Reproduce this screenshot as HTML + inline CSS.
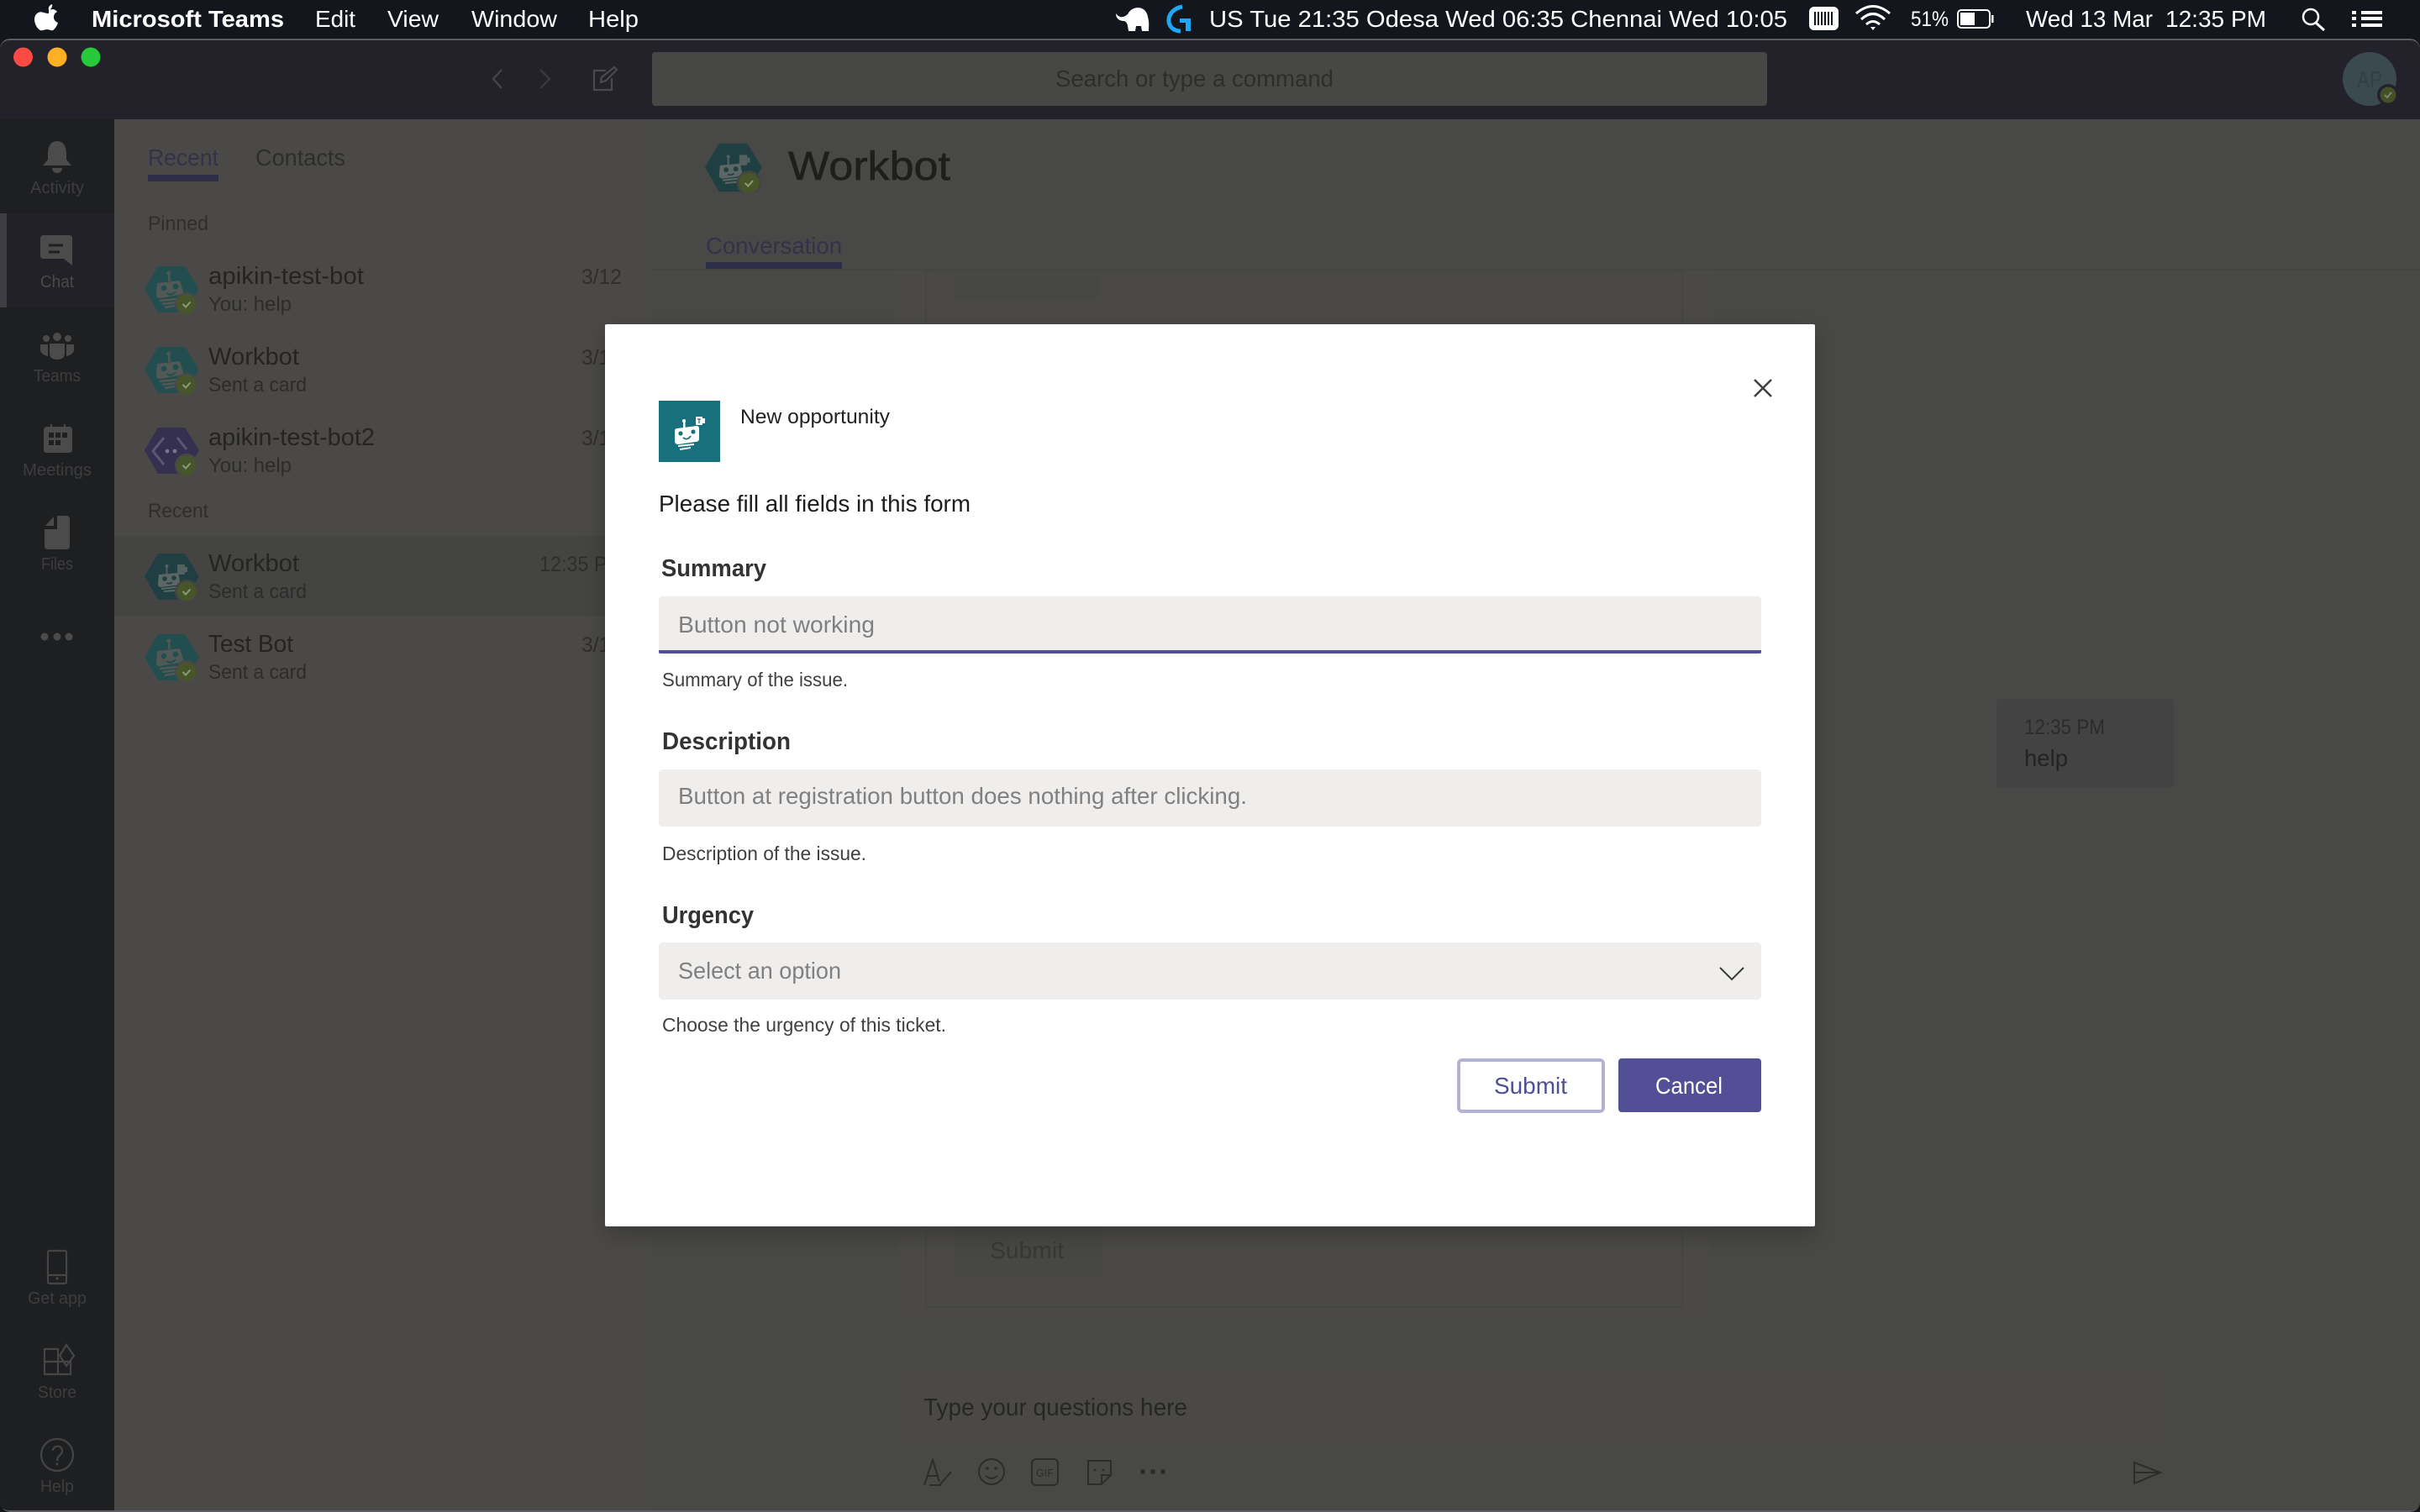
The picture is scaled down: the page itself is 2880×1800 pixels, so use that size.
<!DOCTYPE html>
<html lang="en">
<head>
<meta charset="utf-8">
<title>Microsoft Teams - Workbot</title>
<style>
html,body{margin:0;padding:0;background:#14161d;width:2880px;height:1800px;overflow:hidden}
svg{display:block}
text{font-family:"Liberation Sans",sans-serif;white-space:pre}
.b{font-weight:700}
</style>
</head>
<body>
<svg xmlns="http://www.w3.org/2000/svg" width="2880" height="1800" viewBox="0 0 2880 1800">
<defs>
<filter id="sh" x="-10%" y="-10%" width="120%" height="120%"><feDropShadow dx="0" dy="10" stdDeviation="14" flood-color="#000" flood-opacity=".22"/></filter>
<symbol id="bot" viewBox="0 0 65 55" width="65" height="55" overflow="visible">
 <path d="M0 27 16 0H48L65 27 48 55H16Z" fill="#234e4f"/>
 <circle cx="29" cy="8" r="2.6" fill="#4f5654"/><rect x="28" y="9" width="2.5" height="9" fill="#4f5654"/>
 <path d="M15 20 42 17 47 33 18 38Q14 38 14 34Z" fill="#515855"/>
 <circle cx="23" cy="26" r="3.4" fill="#234e4f"/><circle cx="37" cy="24" r="3.4" fill="#234e4f"/>
 <path d="M26 32Q32 36 37 30" stroke="#234e4f" stroke-width="2" fill="none"/>
 <path d="M18 41 39 39M21 45 38 43M24 49 36 47" stroke="#515855" stroke-width="2.5" fill="none"/>
 <circle cx="50" cy="45" r="14" fill="#4a4947"/><circle cx="50" cy="45" r="11.500" fill="#46552a"/>
 <path d="M45.500 45 49 48.500 54.500 42.500" stroke="#8d9a78" stroke-width="2" fill="none"/>
</symbol>
<symbol id="wb" viewBox="0 0 65 55" width="65" height="55" overflow="visible">
 <path d="M0 27 16 0H48L65 27 48 55H16Z" fill="#1f3f43"/>
 <rect x="39" y="13" width="9" height="12" rx="1" fill="#556060"/><rect x="48" y="16" width="3" height="6" fill="#556060"/>
 <rect x="25.500" y="17" width="2" height="7" fill="#556060"/><circle cx="26.500" cy="15" r="2" fill="#556060"/>
 <path d="M17 25 40 23 43 37 20 40Q16 40 16 36Z" fill="#5c6664"/>
 <circle cx="24" cy="30" r="2.8" fill="#1f3f43"/><circle cx="35" cy="29" r="2.8" fill="#1f3f43"/>
 <path d="M26 35Q30 37 33 34" stroke="#1f3f43" stroke-width="1.600" fill="none"/>
 <path d="M20 42 38 40M23 45 36 44" stroke="#5c6664" stroke-width="2" fill="none"/>
 <circle cx="50" cy="45" r="14" fill="#444443"/><circle cx="50" cy="45" r="11.500" fill="#46552a"/>
 <path d="M45.500 45 49 48.500 54.500 42.500" stroke="#8d9a78" stroke-width="2" fill="none"/>
</symbol>
<symbol id="pb" viewBox="0 0 65 55" width="65" height="55" overflow="visible">
 <path d="M0 27 16 0H48L65 27 48 55H16Z" fill="#35304f"/>
 <path d="M23 12 10 28 23 44M39 12 50 26" stroke="#5a5870" stroke-width="3" fill="none"/>
 <circle cx="27" cy="28" r="2.4" fill="#77768a"/><circle cx="36" cy="28" r="2.4" fill="#77768a"/>
 <circle cx="50" cy="45" r="14" fill="#4a4947"/><circle cx="50" cy="45" r="11.500" fill="#46552a"/>
 <path d="M45.500 45 49 48.500 54.500 42.500" stroke="#8d9a78" stroke-width="2" fill="none"/>
</symbol>
</defs>

<!-- backdrop -->
<rect width="2880" height="1800" fill="#14161d"/>
<rect x="0" y="46" width="2880" height="1754" rx="12" fill="#5d5c63"/>
<rect x="0" y="48" width="2880" height="1750" rx="11" fill="#23222b"/>
<path d="M0 142H136V1798H11Q0 1798 0 1787Z" fill="#1e1f21"/>
<rect x="136" y="142" width="640" height="1656" fill="#4a4947"/>
<path d="M776 142H2880V1787Q2880 1798 2869 1798H776Z" fill="#484846"/>

<!-- menu bar -->
<path d="M56 14C50 14 47 10 42 14 36 19 40 31 46 34 48 35 51 33 54 33 57 33 59 35 61 34 64 32 66 28 67 25 61 23 60 15 66 12 63 8 59 9 56 10ZM56 10C55 7 57 4 60 3 61 6 58 10 56 10Z" fill="#fff" transform="translate(2 2)"/>
<text class="b" x="109" y="32" font-size="28" fill="#fff" textLength="229" lengthAdjust="spacingAndGlyphs">Microsoft Teams</text>
<text x="375" y="32" font-size="28" fill="#fff" textLength="48" lengthAdjust="spacingAndGlyphs">Edit</text>
<text x="461" y="32" font-size="28" fill="#fff" textLength="61" lengthAdjust="spacingAndGlyphs">View</text>
<text x="561" y="32" font-size="28" fill="#fff" textLength="102" lengthAdjust="spacingAndGlyphs">Window</text>
<text x="700" y="32" font-size="28" fill="#fff" textLength="60" lengthAdjust="spacingAndGlyphs">Help</text>
<path d="M1328 16C1332 21 1336 22 1342 17 1347 6 1364 6 1366 20 1368 27 1367 32 1367 37H1359L1358 31 1352 31 1351 37H1343C1342 30 1342 27 1338 25 1332 25 1328 22 1328 16Z" fill="#fff"/>
<path d="M1407 8C1396 10 1390 18 1391 26 1392 33 1398 37 1405 37" fill="none" stroke="#1ea7f2" stroke-width="5"/>
<path d="M1404 22H1417V37H1411V27H1404Z" fill="#1ea7f2"/>
<text x="1439" y="32" font-size="28" fill="#fff" textLength="688" lengthAdjust="spacingAndGlyphs">US Tue 21:35 Odesa Wed 06:35 Chennai Wed 10:05</text>
<rect x="2153" y="8" width="35" height="28" rx="6" fill="#fff"/>
<path d="M2160 14V30M2164 14V30M2168 14V30M2172 14V30M2176 14V30M2180 14V30" stroke="#14161d" stroke-width="2"/>
<path d="M2209 16Q2229 -1 2249 16M2215 23Q2229 10 2243 23M2221 29Q2229 22 2237 29" fill="none" stroke="#fff" stroke-width="3"/>
<path d="M2226 32H2232L2229 36Z" fill="#fff"/>
<text x="2274" y="31" font-size="25" fill="#fff" textLength="45" lengthAdjust="spacingAndGlyphs">51%</text>
<rect x="2330" y="12" width="38" height="21" rx="4" fill="none" stroke="#fff" stroke-width="2"/>
<rect x="2333" y="15" width="17" height="15" fill="#fff"/>
<rect x="2370" y="18" width="2.500" height="9" fill="#fff"/>
<text x="2411" y="32" font-size="28" fill="#fff" textLength="151" lengthAdjust="spacingAndGlyphs">Wed 13 Mar</text>
<text x="2577" y="32" font-size="28" fill="#fff" textLength="120" lengthAdjust="spacingAndGlyphs">12:35 PM</text>
<circle cx="2750" cy="20" r="9" fill="none" stroke="#fff" stroke-width="2.500"/>
<path d="M2756 27 2766 36" stroke="#fff" stroke-width="3"/>
<path d="M2799 13H2804V17H2799ZM2810 13H2835V17H2810ZM2799 20H2804V24H2799ZM2810 20H2835V24H2810ZM2799 28H2804V32H2799ZM2810 28H2835V32H2810Z" fill="#fff"/>

<!-- traffic lights -->
<circle cx="27.500" cy="68" r="11.500" fill="#fc4a44"/>
<circle cx="68" cy="68" r="11.500" fill="#fdb024"/>
<circle cx="108" cy="68" r="11.500" fill="#27c83a"/>

<!-- title bar -->
<path d="M597 83 587 94 597 105" fill="none" stroke="#47464d" stroke-width="2.200"/>
<path d="M643 83 654 94 643 105" fill="none" stroke="#3b3a41" stroke-width="2.200"/>
<path d="M721 84H707V107H728V93M715 98 716 92 731 80 734 83 721 96Z" fill="none" stroke="#4a4950" stroke-width="2.200"/>
<rect x="776" y="62" width="1327" height="64" rx="4" fill="#474745"/>
<text x="1256" y="103" font-size="28" fill="#2d2d2c" textLength="331" lengthAdjust="spacingAndGlyphs">Search or type a command</text>
<circle cx="2820" cy="94" r="32" fill="#3b4a4f"/>
<text x="2805" y="104" font-size="28" fill="#34403f" textLength="30" lengthAdjust="spacingAndGlyphs">AP</text>
<circle cx="2842" cy="113" r="13" fill="#23222b"/><circle cx="2842" cy="113" r="9.500" fill="#44502a"/>
<path d="M2838 113 2841 116 2846 110" stroke="#7f8c6b" stroke-width="1.800" fill="none"/>

<!-- rail -->
<rect x="0" y="254" width="136" height="112" fill="#212127"/>
<rect x="0" y="254" width="8" height="112" fill="#3d3d42"/>
<g fill="#4b4b4c">
 <path d="M68 168C76 168 79 175 79 184V190L85 197H51L57 190V184C57 175 60 168 68 168Z"/>
 <path d="M62 200H74C74 204 71 206 68 206 65 206 62 204 62 200Z"/>
 <path d="M52 280H82Q86 280 86 284V316L76 308H52Q48 308 48 304V284Q48 280 52 280Z"/>
 <circle cx="68" cy="401" r="5"/><circle cx="55" cy="403" r="4"/><circle cx="81" cy="403" r="4"/>
 <path d="M59 409H77V420Q77 428 68 428 59 428 59 420Z"/><path d="M48 410H57V424Q48 422 48 416ZM79 410H88V416Q88 422 79 424Z"/>
 <rect x="60" y="505" width="2" height="5"/><rect x="76" y="505" width="2" height="5"/>
 <path d="M56 508H82Q86 508 86 512V535Q86 539 82 539H56Q52 539 52 535V512Q52 508 56 508Z"/>
 <path d="M68 614H79Q83 614 83 618V650Q83 654 79 654H57Q53 654 53 650V630H68Z"/>
 <path d="M54 626 64 615V626Z"/>
 <circle cx="53" cy="758" r="4.500"/><circle cx="68" cy="758" r="4.500"/><circle cx="82" cy="758" r="4.500"/>
</g>
<path d="M58 292H75M58 300H71" stroke="#1f1f22" stroke-width="3"/>
<path d="M58 515H64V521H58ZM66 515H72V521H66ZM74 515H80V521H74ZM58 524H64V530H58ZM66 524H72V530H66Z" fill="#1e1f21"/>
<g fill="none" stroke="#454546" stroke-width="2.200">
 <rect x="57" y="1489" width="22" height="39" rx="2"/><path d="M57 1518H79"/>
 <path d="M53 1606H69V1636H53ZM53 1621H84V1636H69V1606"/>
 <path d="M79 1601 88 1614 79 1626 71 1614Z"/>
 <circle cx="68" cy="1732" r="19"/>
 <path d="M63 1727C63 1720 74 1720 74 1727 74 1733 68 1732 68 1739"/>
</g>
<circle cx="68" cy="1522" r="1.800" fill="#454546"/><circle cx="68" cy="1743" r="1.500" fill="#454546"/>
<g font-size="20" fill="#3d3d3e">
 <text x="36" y="230" textLength="64" lengthAdjust="spacingAndGlyphs">Activity</text>
 <text x="48" y="342" fill="#4a4a4a" textLength="40" lengthAdjust="spacingAndGlyphs">Chat</text>
 <text x="40" y="454" textLength="56" lengthAdjust="spacingAndGlyphs">Teams</text>
 <text x="27" y="566" textLength="82" lengthAdjust="spacingAndGlyphs">Meetings</text>
 <text x="49" y="678" textLength="38" lengthAdjust="spacingAndGlyphs">Files</text>
 <text x="33" y="1552" textLength="70" lengthAdjust="spacingAndGlyphs">Get app</text>
 <text x="45" y="1664" textLength="46" lengthAdjust="spacingAndGlyphs">Store</text>
 <text x="48" y="1776" textLength="40" lengthAdjust="spacingAndGlyphs">Help</text>
</g>

<!-- list pane -->
<text x="176" y="197" font-size="28" fill="#33324a" textLength="84" lengthAdjust="spacingAndGlyphs">Recent</text>
<text x="304" y="197" font-size="28" fill="#2d2d2c" textLength="107" lengthAdjust="spacingAndGlyphs">Contacts</text>
<rect x="176" y="208" width="84" height="8" fill="#2e2d48"/>
<rect x="260" y="216" width="476" height="1" fill="#474644"/>
<text x="176" y="274" font-size="24" fill="#2f2e2d" textLength="72" lengthAdjust="spacingAndGlyphs">Pinned</text>
<text x="176" y="616" font-size="24" fill="#2f2e2d" textLength="72" lengthAdjust="spacingAndGlyphs">Recent</text>
<rect x="136" y="638" width="640" height="95" fill="#444443"/>

<use href="#bot" x="172" y="317"/>
<text x="248" y="338" font-size="29" fill="#252422" textLength="185" lengthAdjust="spacingAndGlyphs">apikin-test-bot</text>
<text x="248" y="370" font-size="24" fill="#2d2c2b" textLength="99" lengthAdjust="spacingAndGlyphs">You: help</text>
<text x="692" y="338" font-size="25" fill="#2f2e2d" textLength="48" lengthAdjust="spacingAndGlyphs">3/12</text>

<use href="#bot" x="172" y="413"/>
<text x="248" y="434" font-size="29" fill="#252422" textLength="108" lengthAdjust="spacingAndGlyphs">Workbot</text>
<text x="248" y="466" font-size="24" fill="#2d2c2b" textLength="117" lengthAdjust="spacingAndGlyphs">Sent a card</text>
<text x="692" y="434" font-size="25" fill="#2f2e2d" textLength="48" lengthAdjust="spacingAndGlyphs">3/12</text>

<use href="#pb" x="172" y="509"/>
<text x="248" y="530" font-size="29" fill="#252422" textLength="198" lengthAdjust="spacingAndGlyphs">apikin-test-bot2</text>
<text x="248" y="562" font-size="24" fill="#2d2c2b" textLength="99" lengthAdjust="spacingAndGlyphs">You: help</text>
<text x="692" y="530" font-size="25" fill="#2f2e2d" textLength="48" lengthAdjust="spacingAndGlyphs">3/12</text>

<use href="#wb" x="172" y="659"/>
<text x="248" y="680" font-size="29" fill="#252422" textLength="108" lengthAdjust="spacingAndGlyphs">Workbot</text>
<text x="248" y="712" font-size="24" fill="#2d2c2b" textLength="117" lengthAdjust="spacingAndGlyphs">Sent a card</text>
<text x="642" y="680" font-size="25" fill="#2f2e2d" textLength="100" lengthAdjust="spacingAndGlyphs">12:35 PM</text>

<use href="#bot" x="172" y="755"/>
<text x="248" y="776" font-size="29" fill="#252422" textLength="101" lengthAdjust="spacingAndGlyphs">Test Bot</text>
<text x="248" y="808" font-size="24" fill="#2d2c2b" textLength="117" lengthAdjust="spacingAndGlyphs">Sent a card</text>
<text x="692" y="776" font-size="25" fill="#2f2e2d" textLength="48" lengthAdjust="spacingAndGlyphs">3/12</text>

<!-- main header -->
<svg x="839" y="170" width="68" height="59" viewBox="0 0 65 55"><use href="#wb"/></svg>
<text x="938" y="214" font-size="48" fill="#1f1e1d" stroke="#1f1e1d" stroke-width=".6" textLength="193" lengthAdjust="spacingAndGlyphs">Workbot</text>
<text x="840" y="302" font-size="28" fill="#33324a" textLength="162" lengthAdjust="spacingAndGlyphs">Conversation</text>
<rect x="840" y="312" width="162" height="8" fill="#2e2d48"/>
<rect x="776" y="320" width="2104" height="2" fill="#454543"/>

<!-- conversation card (dimmed) -->
<rect x="1067" y="322" width="970" height="1250" fill="#4a4947"/>
<rect x="1102" y="322" width="900" height="1234" rx="3" fill="#4a4947" stroke="#454543" stroke-width="2"/>
<rect x="1137" y="322" width="173" height="36" fill="#474745"/>
<rect x="1136" y="1440" width="176" height="80" rx="3" fill="#474745"/>
<text x="1178" y="1498" font-size="28" fill="#383736" textLength="88" lengthAdjust="spacingAndGlyphs">Submit</text>

<!-- bubble -->
<rect x="2376" y="832" width="211" height="106" rx="4" fill="#434344"/>
<text x="2409" y="874" font-size="25" fill="#2c2c2b" textLength="96" lengthAdjust="spacingAndGlyphs">12:35 PM</text>
<text x="2409" y="912" font-size="28" fill="#232322" textLength="52" lengthAdjust="spacingAndGlyphs">help</text>

<!-- compose -->
<rect x="1070" y="1632" width="1516" height="88" rx="3" fill="#4a4947"/>
<text x="1099" y="1685" font-size="29" fill="#262625" textLength="314" lengthAdjust="spacingAndGlyphs">Type your questions here</text>
<g fill="none" stroke="#2c2c2b" stroke-width="2">
 <path d="M1100 1768 1110 1738 1118 1764M1104 1757H1115M1118 1768 1132 1752M1106 1768H1120"/>
 <circle cx="1180" cy="1752" r="15"/>
 <path d="M1173 1757Q1180 1763 1187 1757"/>
 <rect x="1228" y="1737" width="31" height="31" rx="5"/>
 <path d="M1295 1739H1322V1756L1311 1767H1295ZM1322 1756H1311V1767"/>
 <path d="M2540 1741 2571 1753 2540 1766ZM2540 1753H2571"/>
</g>
<circle cx="1175" cy="1748" r="1.800" fill="#2c2c2b"/><circle cx="1185" cy="1748" r="1.800" fill="#2c2c2b"/>
<text x="1233" y="1758" font-size="13" fill="#2c2c2b" textLength="21" lengthAdjust="spacingAndGlyphs">GIF</text>
<circle cx="1303" cy="1750" r="1.500" fill="#2c2c2b"/><circle cx="1313" cy="1750" r="1.500" fill="#2c2c2b"/>
<circle cx="1360" cy="1752" r="3" fill="#2c2c2b"/><circle cx="1372" cy="1752" r="3" fill="#2c2c2b"/><circle cx="1384" cy="1752" r="3" fill="#2c2c2b"/>

<!-- dialog -->
<rect x="720" y="386" width="1440" height="1074" rx="2" fill="#fff" filter="url(#sh)"/>
<path d="M2088 452 2108 472M2108 452 2088 472" stroke="#3f3f3f" stroke-width="2.500"/>
<rect x="784" y="477" width="73" height="73" fill="#17707c"/>
<g fill="#fff">
 <path d="M806 510 829 507Q832 507 832 510L832 522Q832 526 828 526L807 529Q803 529 803 525V513Q803 510 806 510Z"/>
 <rect x="813" y="502" width="2.500" height="7"/><circle cx="814" cy="501" r="2"/>
 <rect x="828" y="496" width="8" height="10" rx="1"/><rect x="836" y="498" width="3" height="6"/>
 <path d="M807 530 826 528 826 530 807 532ZM809 534 822 532 822 534 809 536Z"/>
</g>
<path d="M830 499H834M832 499V504" stroke="#17707c" stroke-width="1.200"/>
<circle cx="810" cy="516" r="2.600" fill="#17707c"/><circle cx="825" cy="514" r="2.600" fill="#17707c"/>
<path d="M813 521Q818 525 822 519" stroke="#17707c" stroke-width="1.800" fill="none"/>

<text x="881" y="504" font-size="24" fill="#222" textLength="178" lengthAdjust="spacingAndGlyphs">New opportunity</text>
<text x="784" y="609" font-size="28" fill="#1c1c1c" textLength="371" lengthAdjust="spacingAndGlyphs">Please fill all fields in this form</text>

<text class="b" x="787" y="686" font-size="29" fill="#333" textLength="125" lengthAdjust="spacingAndGlyphs">Summary</text>
<path d="M788 710H2092Q2096 710 2096 714V778H784V714Q784 710 788 710Z" fill="#efeeed"/>
<path d="M784 774H2096V776Q2096 778 2094 778H786Q784 778 784 776Z" fill="#4f4f96"/>
<text x="807" y="753" font-size="28" fill="#808080" textLength="234" lengthAdjust="spacingAndGlyphs">Button not working</text>
<text x="788" y="817" font-size="23" fill="#404040" textLength="221" lengthAdjust="spacingAndGlyphs">Summary of the issue.</text>

<text class="b" x="788" y="892" font-size="29" fill="#333" textLength="153" lengthAdjust="spacingAndGlyphs">Description</text>
<rect x="784" y="916" width="1312" height="68" rx="4" fill="#efeeed"/>
<text x="807" y="957" font-size="28" fill="#808080" textLength="677" lengthAdjust="spacingAndGlyphs">Button at registration button does nothing after clicking.</text>
<text x="788" y="1024" font-size="23" fill="#404040" textLength="243" lengthAdjust="spacingAndGlyphs">Description of the issue.</text>

<text class="b" x="788" y="1099" font-size="29" fill="#333" textLength="109" lengthAdjust="spacingAndGlyphs">Urgency</text>
<rect x="784" y="1122" width="1312" height="68" rx="4" fill="#efeeed"/>
<text x="807" y="1165" font-size="28" fill="#808080" textLength="194" lengthAdjust="spacingAndGlyphs">Select an option</text>
<path d="M2047 1152 2061 1166 2075 1152" fill="none" stroke="#3a3a3a" stroke-width="2"/>
<text x="788" y="1228" font-size="23" fill="#404040" textLength="338" lengthAdjust="spacingAndGlyphs">Choose the urgency of this ticket.</text>

<rect x="1736" y="1262" width="172" height="61" rx="4" fill="#fff" stroke="#b2b2d4" stroke-width="4"/>
<text x="1778" y="1302" font-size="28" fill="#4f4f96" textLength="87" lengthAdjust="spacingAndGlyphs">Submit</text>
<rect x="1926" y="1260" width="170" height="64" rx="4" fill="#524f96"/>
<text x="1970" y="1302" font-size="28" fill="#fff" textLength="80" lengthAdjust="spacingAndGlyphs">Cancel</text>
</svg>
</body>
</html>
